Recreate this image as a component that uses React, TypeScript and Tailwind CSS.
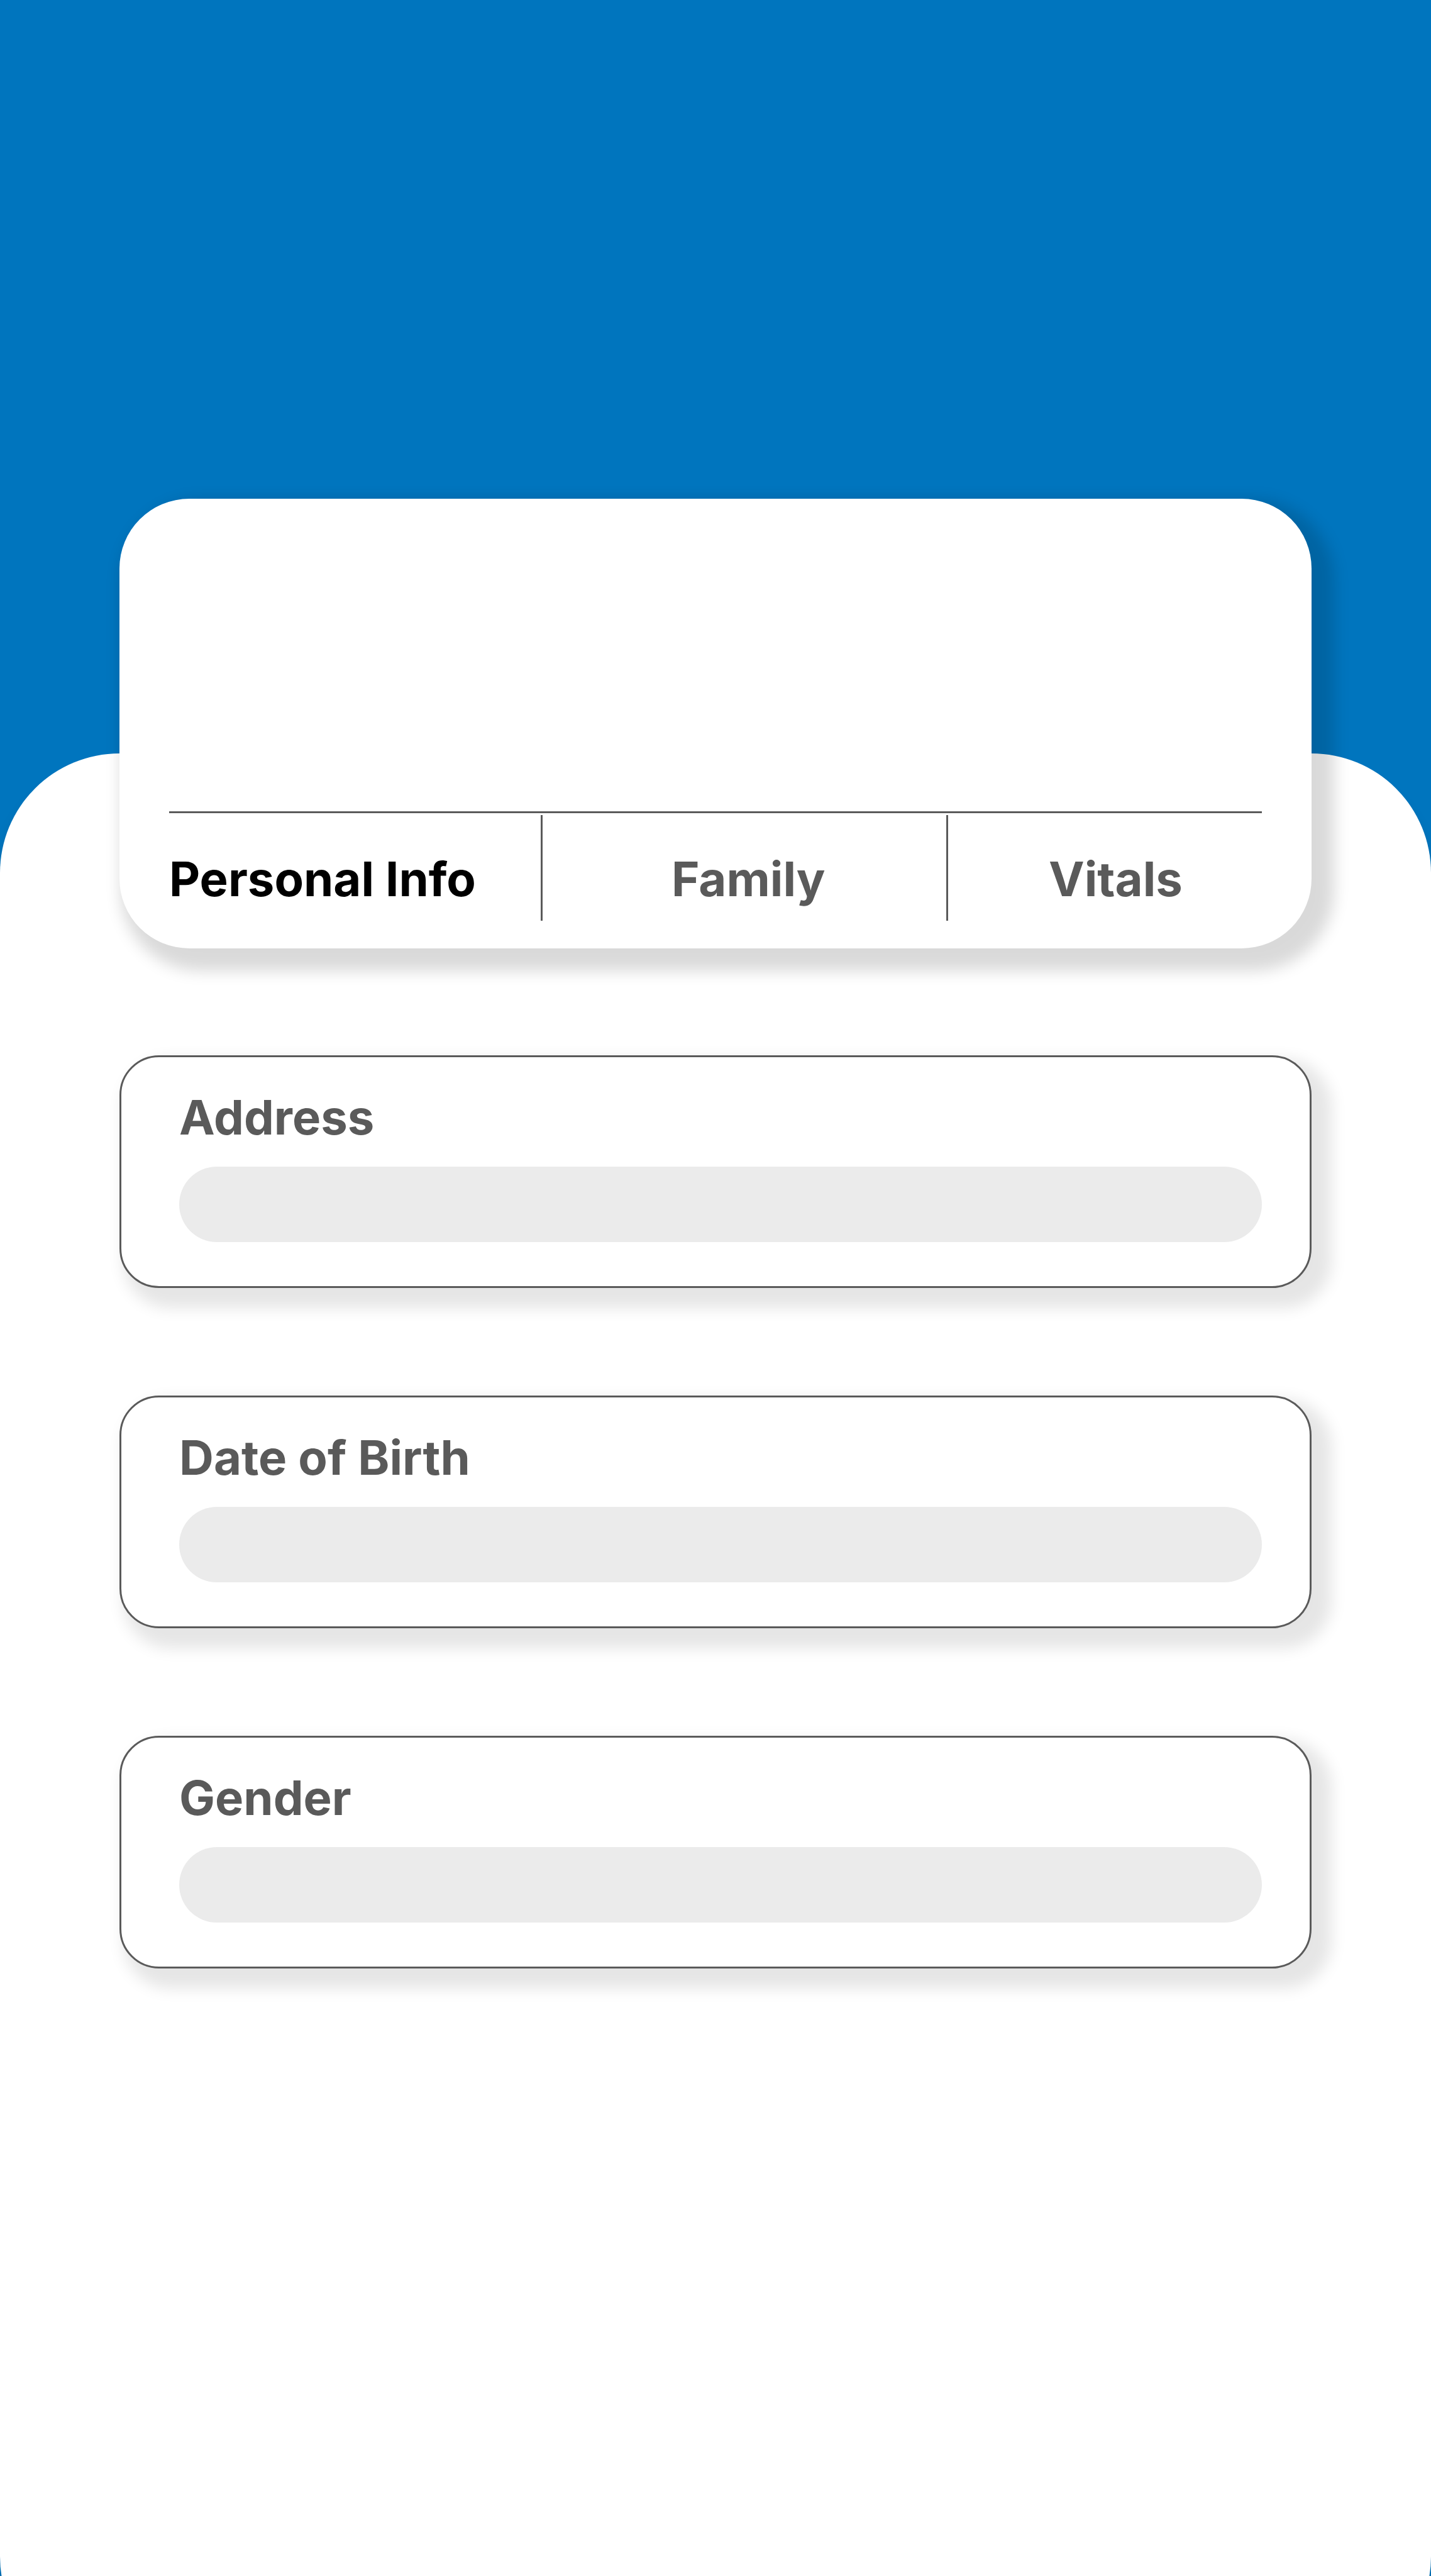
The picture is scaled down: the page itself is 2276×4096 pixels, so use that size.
const tabs = [
  { name: "Personal Info", active: true, className: "text-black" },
  { name: "Family", active: false, className: "border-l-3 border-[#5a5a5a] pl-[205px]" },
  { name: "Vitals", active: false, className: "border-l-3 border-[#5a5a5a] pl-[160px]" },
];

const fields = [
  { id: "address", label: "Address" },
  { id: "birth", label: "Date of Birth" },
  { id: "gender", label: "Gender" },
];

function TabCard() {
  return (
    <section className="-mt-[405px] flex flex-col rounded-[111px] bg-white px-[79px] pb-11 shadow-[19px_19px_24px_17px_rgba(0,0,0,0.15)]">
      <div className="box-content h-[497px] border-b-3 border-[#5a5a5a]" />
      <nav role="tablist" className="mt-[3px] grid h-[168px] grid-cols-[591fr_645fr_502fr]">
        {tabs.map((tab) => (
          <button
            key={tab.name}
            type="button"
            role="tab"
            aria-selected={tab.active}
            className={`flex items-start pt-[55px] text-left font-bold whitespace-nowrap ${tab.className}`}
          >
            {tab.name}
          </button>
        ))}
      </nav>
    </section>
  );
}

function Field({ id, label }: { id: string; label: string }) {
  return (
    <div className="flex flex-col gap-[33px] rounded-[63px] border-3 border-[#5a5a5a] bg-white pt-[49px] pr-[76px] pb-[70px] pl-[92px] shadow-[19px_19px_24px_13px_rgba(0,0,0,0.1)]">
      <label htmlFor={id} className="font-bold">
        {label}
      </label>
      <input id={id} type="text" className="h-[120px] w-full rounded-full bg-[#ebebeb] px-14 outline-none" />
    </div>
  );
}

export default function App() {
  return (
    <div className="flex min-h-screen flex-col overflow-hidden bg-[#0075be] font-['Inter',sans-serif] text-[76px] leading-[92px] text-[#5a5a5a]">
      <header className="h-[1198px] shrink-0" />
      <main className="-mb-[159px] flex-1 rounded-[190px] bg-white px-[190px] pb-[320px] shadow-[0_25px_25px_rgba(0,0,0,0.15)]">
        <TabCard />
        <form className="mt-[170px] flex flex-col gap-[171px]">
          {fields.map((field) => (
            <Field key={field.id} {...field} />
          ))}
        </form>
      </main>
    </div>
  );
}
